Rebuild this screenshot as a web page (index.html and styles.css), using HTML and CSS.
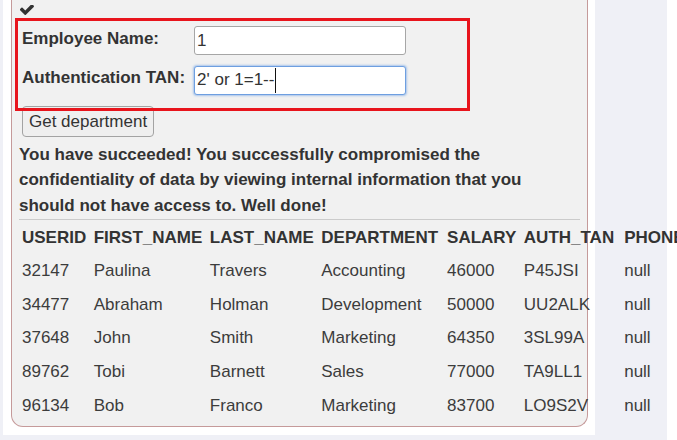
FILE: index.html
```html
<!DOCTYPE html>
<html lang="en">
<head>
<meta charset="utf-8">
<title>SQL Injection - Get department</title>
<link rel="stylesheet" href="styles.css">
</head>
<body>
<div class="page">
  <div class="main">
    <div class="sheet">
      <div class="panel">
        <div class="check">
          <svg class="check-icon" viewBox="137 430 1534 1092" width="14" height="10" aria-hidden="true"><path d="M1671 566q0 40-28 68l-724 724-136 136q-28 28-68 28t-68-28l-136-136-362-362q-28-28-28-68t28-68l136-136q28-28 68-28t68 28l294 295 656-657q28-28 68-28t68 28l136 136q28 28 28 68z"/></svg>
        </div>
        <form class="form">
          <label class="label" for="name">Employee Name:</label>
          <input class="field" id="name" type="text" value="1">
          <label class="label" for="tan">Authentication TAN:</label>
          <span class="field-wrap">
            <input class="field field-focus" id="tan" type="text" value="2' or 1=1--">
            <span class="caret"></span>
          </span>
        </form>
        <button class="btn" type="button">Get department</button>
        <p class="msg">You have succeeded! You successfully compromised the confidentiality of data by viewing internal information that you should not have access to. Well done!</p>
        <div class="rule"></div>
        <table class="results">
          <thead>
            <tr><th>USERID</th><th>FIRST_NAME</th><th>LAST_NAME</th><th class="col-dept">DEPARTMENT</th><th>SALARY</th><th class="col-tan">AUTH_TAN</th><th>PHONE</th></tr>
          </thead>
          <tbody>
            <tr><td>32147</td><td>Paulina</td><td>Travers</td><td class="col-dept">Accounting</td><td>46000</td><td class="col-tan">P45JSI</td><td>null</td></tr>
            <tr><td>34477</td><td>Abraham</td><td>Holman</td><td class="col-dept">Development</td><td>50000</td><td class="col-tan">UU2ALK</td><td>null</td></tr>
            <tr><td>37648</td><td>John</td><td>Smith</td><td class="col-dept">Marketing</td><td>64350</td><td class="col-tan">3SL99A</td><td>null</td></tr>
            <tr><td>89762</td><td>Tobi</td><td>Barnett</td><td class="col-dept">Sales</td><td>77000</td><td class="col-tan">TA9LL1</td><td>null</td></tr>
            <tr><td>96134</td><td>Bob</td><td>Franco</td><td class="col-dept">Marketing</td><td>83700</td><td class="col-tan">LO9S2V</td><td>null</td></tr>
          </tbody>
        </table>
        <div class="highlight"></div>
      </div>
    </div>
  </div>
</div>
</body>
</html>
```

FILE: styles.css
```css
html, body {
  margin: 0;
  padding: 0;
  background: #ffffff;
  overflow: hidden;
}

body {
  font-family: "Liberation Sans", Arial, sans-serif;
  font-size: 17px;
  color: #333333;
}

.page {
  display: flex;
  height: 440px;
}

.main {
  width: 667px;
  flex: none;
  background: #eff0f6;
  padding-left: 3px;
  box-sizing: border-box;
}

.sheet {
  width: 592px;
  height: 435px;
  background: #ffffff;
  padding: 0 7px 8px 8px;
  box-sizing: border-box;
}

.panel {
  position: relative;
  background: #f1f1f1;
  border: 1px solid #c59a9a;
  border-top: none;
  border-radius: 0 0 12px 12px;
  padding: 0 7px 9px 7px;
  height: 427px;
  box-sizing: border-box;
}

.check {
  height: 25.5px;
  padding: 5px 0 0 1px;
  box-sizing: border-box;
}

.check-icon {
  display: block;
  fill: #333333;
}

.form {
  display: grid;
  grid-template-columns: 172px 212px;
  row-gap: 9.5px;
  align-items: center;
  margin: 0 0 0 3px;
}

.label {
  font-weight: bold;
  line-height: 25px;
  padding-bottom: 5px;
  white-space: nowrap;
}

.field-wrap {
  position: relative;
  display: block;
}

.field {
  display: block;
  width: 212px;
  height: 29px;
  box-sizing: border-box;
  margin: 0;
  border: 1px solid #a6a6a6;
  border-radius: 3px;
  background: #ffffff;
  padding: 0 2px;
  font-family: "Liberation Sans", Arial, sans-serif;
  font-size: 17px;
  color: #333333;
  outline: none;
}

.field-focus {
  border-color: #6e9fe0;
  box-shadow: 0 0 2px 1px rgba(110, 160, 230, 0.55);
}

.caret {
  position: absolute;
  left: 81px;
  top: 2px;
  width: 1px;
  height: 25px;
  background: #111111;
}

.btn {
  display: block;
  margin: 11px 0 0 3px;
  height: 31px;
  padding: 0 6px;
  border: 1px solid #a3a3a3;
  border-radius: 4px;
  background: #efefef;
  font-family: "Liberation Sans", Arial, sans-serif;
  font-size: 17px;
  color: #333333;
}

.msg {
  margin: 4.5px 0 0 0;
  max-width: 540px;
  font-weight: bold;
  line-height: 25.5px;
}

.rule {
  border-top: 1px solid #cbcbcb;
  margin-top: 0.5px;
}

.results {
  border-collapse: collapse;
  margin-top: 1px;
  white-space: nowrap;
  color: #3c3c3c;
}

.results th,
.results td {
  text-align: left;
  padding: 0 4.5px 0 3px;
}

.results .col-dept {
  padding-right: 6px;
}

.results .col-tan {
  padding-right: 7px;
}

.results th {
  height: 34px;
  font-weight: bold;
  color: #333333;
  line-height: 24px;
}

.results td {
  height: 33.6px;
  line-height: 24px;
}

.highlight {
  position: absolute;
  left: 3px;
  top: 18px;
  width: 455px;
  height: 93px;
  border: 3px solid #e8141c;
  box-sizing: border-box;
  pointer-events: none;
}
```
